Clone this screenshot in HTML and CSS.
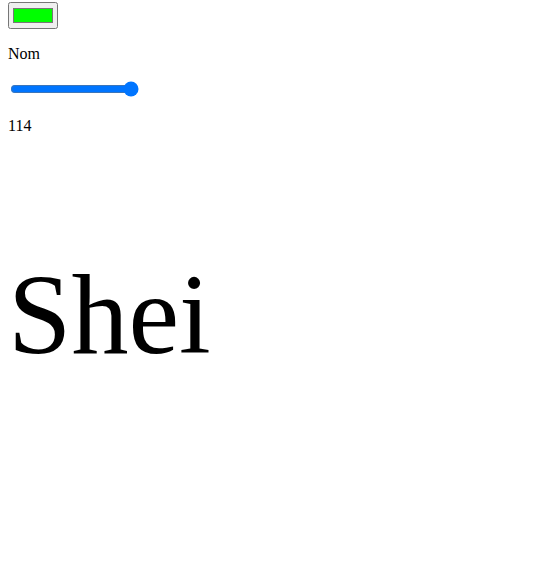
FILE: index.html
```html
<!DOCTYPE html>
<html>
<head>
<meta charset="utf-8">
<link rel="stylesheet" href="styles.css">
</head>
<body>
<input type="color" class="swatch" value="#00ff00">
<p class="label">Nom</p>
<input type="range" class="size" min="0" max="114" value="114">
<p class="value">114</p>
<p class="name">Shei</p>
</body>
</html>
```
FILE: styles.css
```css
body {
  margin: 2px 8px 8px;
  font-family: "Liberation Serif", "Times New Roman", serif;
}
.name {
  font-size: 114px;
}
```
